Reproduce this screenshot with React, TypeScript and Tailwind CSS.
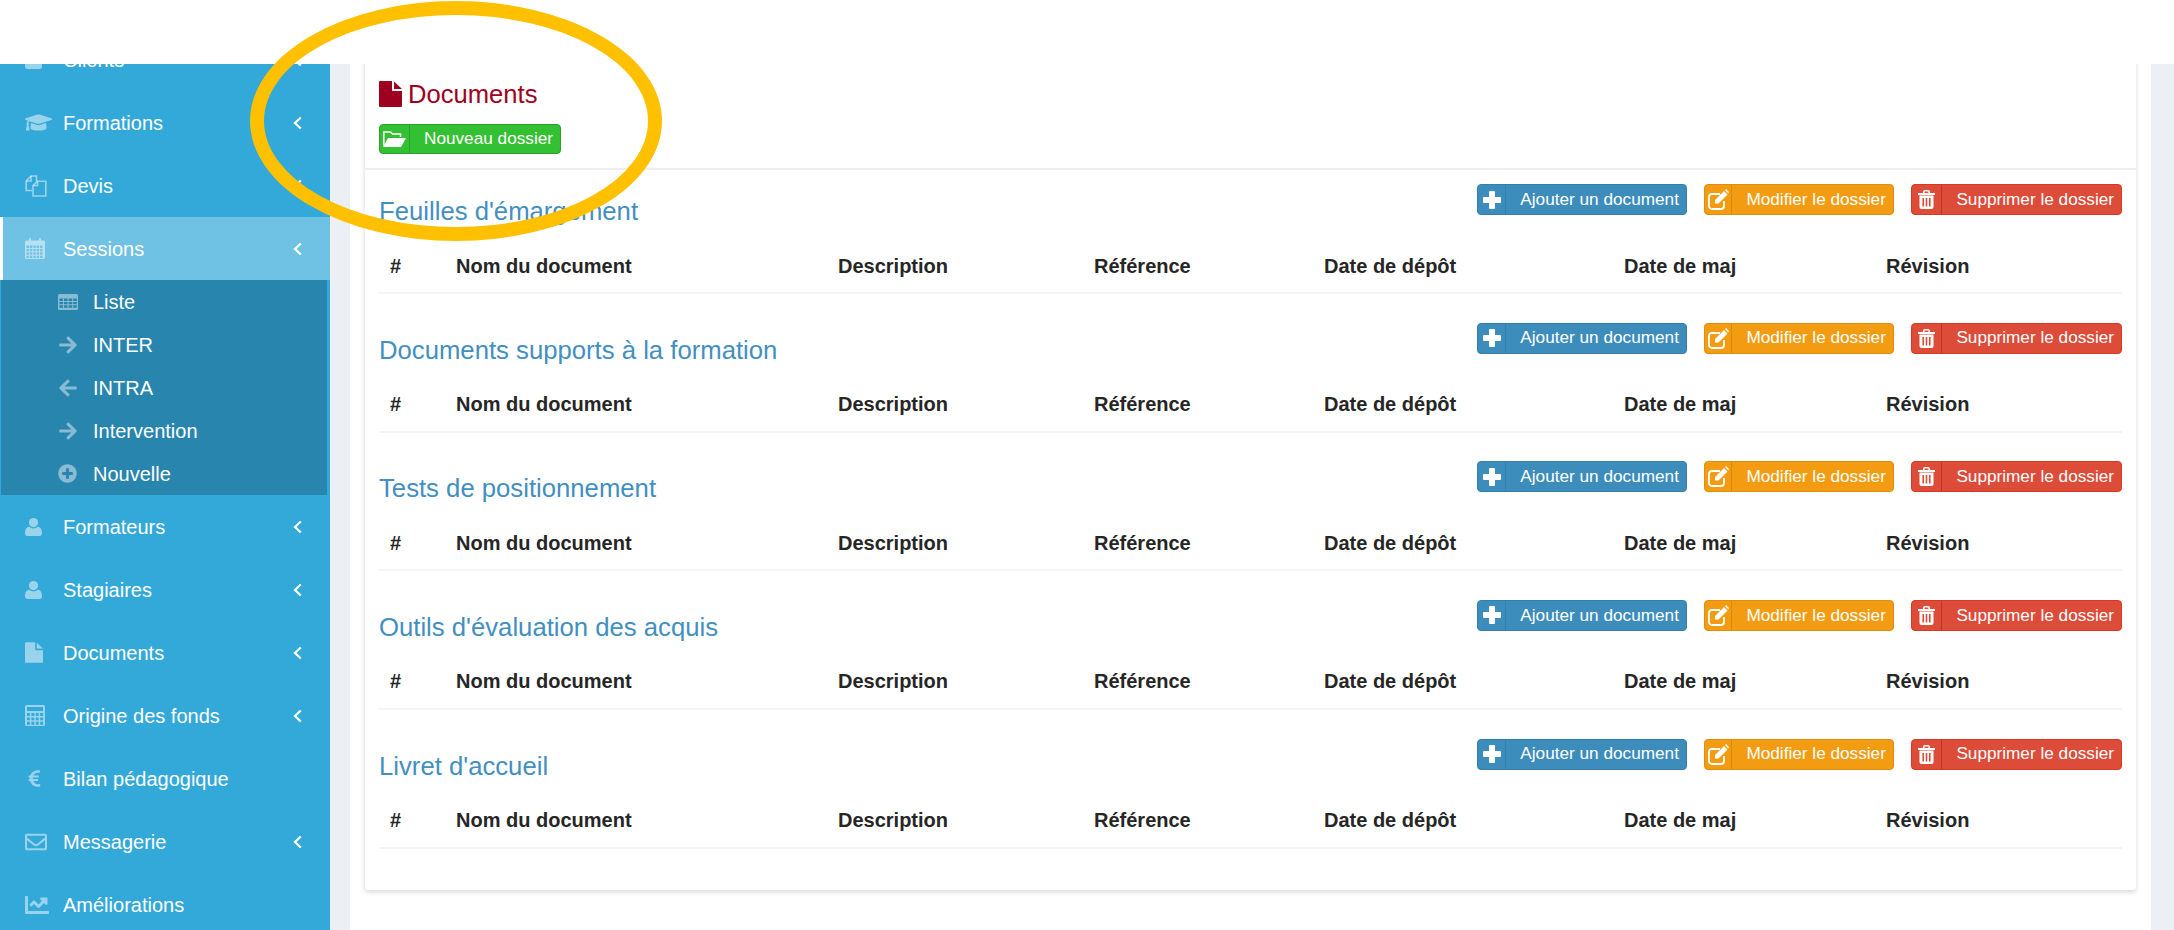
import React from 'react';
import {
  FaArrowLeft, FaArrowRight, FaChartLine, FaEuroSign, FaGraduationCap, FaPlusCircle, FaRegEnvelope,
} from 'react-icons/fa';

type NavItem = { label: string; icon: React.ReactNode; arrow?: boolean };
type IconProps = { className?: string };

const iconClass = 'text-white/50';
const subIconClass = 'text-white/45';

// little square holes for the table, calendar and calculator glyphs
const holes = (x0: number, y0: number, cols: number, rows: number, w: number, h: number, gap: number) => {
  let d = '';
  for (let r = 0; r < rows; r++) {
    for (let c = 0; c < cols; c++) {
      d += `M${x0 + c * (w + gap)} ${y0 + r * (h + gap)}h${w}v${h}h-${w}z`;
    }
  }
  return d;
};

const UserIcon: React.FC<IconProps> = ({ className }) => (
  <svg viewBox="0 0 17 18" className={`h-[18px] w-[17px] fill-current ${className}`}>
    <circle cx="8.5" cy="4.6" r="4.6" />
    <path d="M0 15.2C0 11 1.8 8.8 4.4 8.8C5.8 10 7 10.5 8.5 10.5C10 10.5 11.2 10 12.6 8.8C15.2 8.8 17 11 17 15.2C17 17 16 18 14.5 18H2.5C1 18 0 17 0 15.2Z" />
  </svg>
);

const FilesIcon: React.FC<IconProps> = ({ className }) => (
  <svg viewBox="0 0 22 22" className={`h-[22px] w-[22px] fill-none stroke-current stroke-[1.6] ${className}`}>
    <path d="M7 15.5H1.2V6L6 1H11.5V6" />
    <path d="M6 1V6H1.2" />
    <path d="M12.5 6.2H20.8V21H8V10.5Z" />
    <path d="M12.5 6.2V10.5H8" />
  </svg>
);

const CalendarIcon: React.FC<IconProps> = ({ className }) => (
  <svg viewBox="0 0 20 21" className={`h-[21px] w-[20px] fill-current ${className}`}>
    <path
      fillRule="evenodd"
      d={`M1.5 2.5H4V1a1 1 0 0 1 2 0V2.5H14V1a1 1 0 0 1 2 0V2.5H18.5A1.5 1.5 0 0 1 20 4V19.5A1.5 1.5 0 0 1 18.5 21H1.5A1.5 1.5 0 0 1 0 19.5V4A1.5 1.5 0 0 1 1.5 2.5Z${holes(1.5, 7.5, 5, 4, 2.4, 2.4, 1)}`}
    />
  </svg>
);

const TableIcon: React.FC<IconProps> = ({ className }) => (
  <svg viewBox="0 0 20 16" className={`h-[16px] w-[20px] fill-current ${className}`}>
    <path
      fillRule="evenodd"
      d={`M1.5 0H18.5A1.5 1.5 0 0 1 20 1.5V14.5A1.5 1.5 0 0 1 18.5 16H1.5A1.5 1.5 0 0 1 0 14.5V1.5A1.5 1.5 0 0 1 1.5 0Z${holes(1.4, 4.5, 4, 3, 3.6, 2.4, 1)}`}
    />
  </svg>
);

const CalculatorIcon: React.FC<IconProps> = ({ className }) => (
  <svg viewBox="0 0 20 21" className={`h-[21px] w-[20px] fill-current ${className}`}>
    <path
      fillRule="evenodd"
      d={`M1.5 0H18.5A1.5 1.5 0 0 1 20 1.5V19.5A1.5 1.5 0 0 1 18.5 21H1.5A1.5 1.5 0 0 1 0 19.5V1.5A1.5 1.5 0 0 1 1.5 0ZM2 2V6H18V2Z${holes(2, 8, 4, 3, 2.9, 2.9, 1.5)}`}
    />
  </svg>
);

const FileIcon: React.FC<IconProps> = ({ className }) => (
  <svg viewBox="0 0 23 26" className={`fill-current ${className}`}>
    <path d="M1 0H13V9A1 1 0 0 0 14 10H23V25A1 1 0 0 1 22 26H1A1 1 0 0 1 0 25V1A1 1 0 0 1 1 0Z" />
    <path d="M15 .5L23 8H15Z" />
  </svg>
);

const FolderIcon: React.FC = () => (
  <svg viewBox="0 0 23 16" className="h-[16px] w-[23px] text-white">
    <path d="M.8 14.5V1H7.5L9.5 3H17.5V6" fill="none" stroke="currentColor" strokeWidth="1.5" />
    <path d="M5 7H23L18 16H0Z" fill="currentColor" />
  </svg>
);

const PlusIcon: React.FC = () => (
  <svg viewBox="0 0 18 18" className="h-[18px] w-[18px] fill-current">
    <path d="M7 0H11A1 1 0 0 1 12 1V6H17A1 1 0 0 1 18 7V11A1 1 0 0 1 17 12H12V17A1 1 0 0 1 11 18H7A1 1 0 0 1 6 17V12H1A1 1 0 0 1 0 11V7A1 1 0 0 1 1 6H6V1A1 1 0 0 1 7 0Z" />
  </svg>
);

const EditIcon: React.FC = () => (
  <svg viewBox="0 0 21 21" className="h-[21px] w-[21px]">
    <path d="M16 12V17A3 3 0 0 1 13 20H4A3 3 0 0 1 1 17V8A3 3 0 0 1 4 5H12" fill="none" stroke="currentColor" strokeWidth="1.8" />
    <path d="M7 11L16 2L19.5 5.5L10.5 14.5H7ZM17 1L18 0L21 3L20.5 4.5Z" fill="currentColor" />
  </svg>
);

const TrashIcon: React.FC = () => (
  <svg viewBox="0 0 17 19" className="h-[19px] w-[17px] fill-current">
    <path d="M0 3H5V2A2 2 0 0 1 7 0H10A2 2 0 0 1 12 2V3H17V5H0ZM6.6 3H10.4V1.6H6.6Z" fillRule="evenodd" />
    <path
      fillRule="evenodd"
      d="M1.5 5.5H15.5V17A2 2 0 0 1 13.5 19H3.5A2 2 0 0 1 1.5 17ZM4.4 8V16.5H6V8ZM7.7 8V16.5H9.3V8ZM11 8V16.5H12.6V8Z"
    />
  </svg>
);

const Chevron: React.FC = () => (
  <svg viewBox="0 0 9 14" className="h-[14px] w-[9px] fill-none stroke-white stroke-[2.2]">
    <path d="M7.8 1.5L2 7L7.8 12.5" />
  </svg>
);

const topItems: NavItem[] = [
  { label: 'Clients', icon: <UserIcon className={iconClass} />, arrow: true },
  { label: 'Formations', icon: <FaGraduationCap className={`${iconClass} text-[27px]`} />, arrow: true },
  { label: 'Devis', icon: <FilesIcon className={iconClass} />, arrow: true },
];

const subItems: NavItem[] = [
  { label: 'Liste', icon: <TableIcon className={subIconClass} /> },
  { label: 'INTER', icon: <FaArrowRight className={`${subIconClass} text-[20px]`} /> },
  { label: 'INTRA', icon: <FaArrowLeft className={`${subIconClass} text-[20px]`} /> },
  { label: 'Intervention', icon: <FaArrowRight className={`${subIconClass} text-[20px]`} /> },
  { label: 'Nouvelle', icon: <FaPlusCircle className={`${subIconClass} text-[19px]`} /> },
];

const bottomItems: NavItem[] = [
  { label: 'Formateurs', icon: <UserIcon className={iconClass} />, arrow: true },
  { label: 'Stagiaires', icon: <UserIcon className={iconClass} />, arrow: true },
  { label: 'Documents', icon: <FileIcon className={`${iconClass} h-[21px] w-[18px]`} />, arrow: true },
  { label: 'Origine des fonds', icon: <CalculatorIcon className={iconClass} />, arrow: true },
  { label: 'Bilan pédagogique', icon: <FaEuroSign className={`${iconClass} text-[19px]`} /> },
  { label: 'Messagerie', icon: <FaRegEnvelope className={`${iconClass} text-[22px]`} />, arrow: true },
  { label: 'Améliorations', icon: <FaChartLine className={`${iconClass} text-[24px]`} /> },
];

const folders = [
  "Feuilles d'émargement",
  'Documents supports à la formation',
  'Tests de positionnement',
  "Outils d'évaluation des acquis",
  "Livret d'accueil",
];

const columns = [
  { label: '#', width: 'w-[66px]' },
  { label: 'Nom du document', width: 'w-[382px]' },
  { label: 'Description', width: 'w-[256px]' },
  { label: 'Référence', width: 'w-[230px]' },
  { label: 'Date de dépôt', width: 'w-[300px]' },
  { label: 'Date de maj', width: 'w-[262px]' },
  { label: 'Révision', width: 'w-[247px]' },
];

const NavRow: React.FC<{ item: NavItem; active?: boolean }> = ({ item, active }) => (
  <div
    className={`flex h-[63px] items-center pr-[28px] text-[20px] text-white ${
      active ? 'border-l-[3px] border-white bg-[#6fc2e3] pl-[22px]' : 'pl-[25px]'
    }`}
  >
    <span className="flex w-[38px] shrink-0 items-center">{item.icon}</span>
    <span className="flex-1">{item.label}</span>
    {item.arrow && <Chevron />}
  </div>
);

const Sidebar: React.FC = () => (
  <aside className="w-[330px] shrink-0 overflow-hidden bg-[#33a9d9]">
    <div className="-mt-[36px]">
      {topItems.map(item => (
        <NavRow key={item.label} item={item} />
      ))}
      <NavRow item={{ label: 'Sessions', icon: <CalendarIcon className={iconClass} />, arrow: true }} active />
      <div className="ml-px mr-[3px] bg-[#2885ae]">
        {subItems.map(item => (
          <div key={item.label} className="flex h-[43px] items-center pl-[57px] text-[20px] text-white">
            <span className="flex w-[35px] shrink-0 items-center">{item.icon}</span>
            {item.label}
          </div>
        ))}
      </div>
      {bottomItems.map(item => (
        <NavRow key={item.label} item={item} />
      ))}
    </div>
  </aside>
);

const ActionButton: React.FC<{
  icon: React.ReactNode;
  label: string;
  colors: string;
  iconWidth: string;
  divider: string;
}> = ({ icon, label, colors, iconWidth, divider }) => (
  <button className={`flex h-[31px] items-center rounded-[4px] border text-[17.2px] text-white ${colors}`}>
    <span className={`flex h-full shrink-0 items-center justify-center border-r ${iconWidth} ${divider}`}>{icon}</span>
    <span className="whitespace-nowrap pl-[14px] pr-[7px]">{label}</span>
  </button>
);

const FolderSection: React.FC<{ title: string }> = ({ title }) => (
  <section className="h-[138.65px]">
    <div className="flex h-[69px] items-start justify-between">
      <h3 className="mt-[27px] text-[25.7px] leading-[28px] text-[#428fc0]">{title}</h3>
      <div className="mt-[14px] flex gap-[17.5px]">
        <ActionButton
          icon={<PlusIcon />}
          label="Ajouter un document"
          colors="bg-[#3c8dbc] border-[#367fa9]"
          iconWidth="w-[28px]"
          divider="border-[#367fa9]"
        />
        <ActionButton
          icon={<EditIcon />}
          label="Modifier le dossier"
          colors="bg-[#f39c12] border-[#e08e0b]"
          iconWidth="w-[27px]"
          divider="border-[#d68a0c]"
        />
        <ActionButton
          icon={<TrashIcon />}
          label="Supprimer le dossier"
          colors="bg-[#dd4b39] border-[#d73925]"
          iconWidth="w-[30px]"
          divider="border-[#c23321]"
        />
      </div>
    </div>
    <table className="w-[1743px] table-fixed border-b-2 border-[#f4f4f4]">
      <thead>
        <tr>
          {columns.map(col => (
            <th key={col.label} className={`h-[54px] px-[11px] text-left text-[20px] font-bold text-[#262626] ${col.width}`}>
              {col.label}
            </th>
          ))}
        </tr>
      </thead>
    </table>
  </section>
);

const App: React.FC = () => (
  <div className="relative h-[930px] w-[2174px] overflow-hidden bg-white font-['Liberation_Sans',Arial,sans-serif]">
    <div className="h-16 bg-white" />
    <div className="flex h-[866px]">
      <Sidebar />
      <main className="flex-1 overflow-hidden bg-[#ecf0f5] pl-5 pr-[23px]">
        <div className="flow-root h-full bg-white px-[15px]">
          <div className="-mt-2 h-[834px] rounded-[3px] bg-white px-[14px] pt-2 shadow-[0_2px_5px_rgba(0,0,0,0.16)]">
            <div className="-mx-[14px] h-[106px] border-b-2 border-[#eeeeee] px-[14px] pt-[14px]">
              <h2 className="flex h-[32px] items-center gap-[6px] text-[25.6px] text-[#a00020]">
                <FileIcon className="h-[26px] w-[23px]" />
                Documents
              </h2>
              <button className="mt-[14px] flex h-[30px] items-center rounded-[4px] border border-[#2ca02c] bg-[#33c033] text-[17.2px] text-white">
                <span className="flex h-full w-[30px] items-center justify-center border-r border-[#2ca02c]">
                  <FolderIcon />
                </span>
                <span className="whitespace-nowrap pl-[14px] pr-[7px]">Nouveau dossier</span>
              </button>
            </div>
            {folders.map(title => (
              <FolderSection key={title} title={title} />
            ))}
          </div>
        </div>
      </main>
    </div>
    {/* hand-drawn highlight on top of the screenshot */}
    <div className="pointer-events-none absolute left-[250px] top-[1px] h-[240px] w-[412px] rounded-[50%] border-[14px] border-[#ffc000]" />
  </div>
);

export default App;
